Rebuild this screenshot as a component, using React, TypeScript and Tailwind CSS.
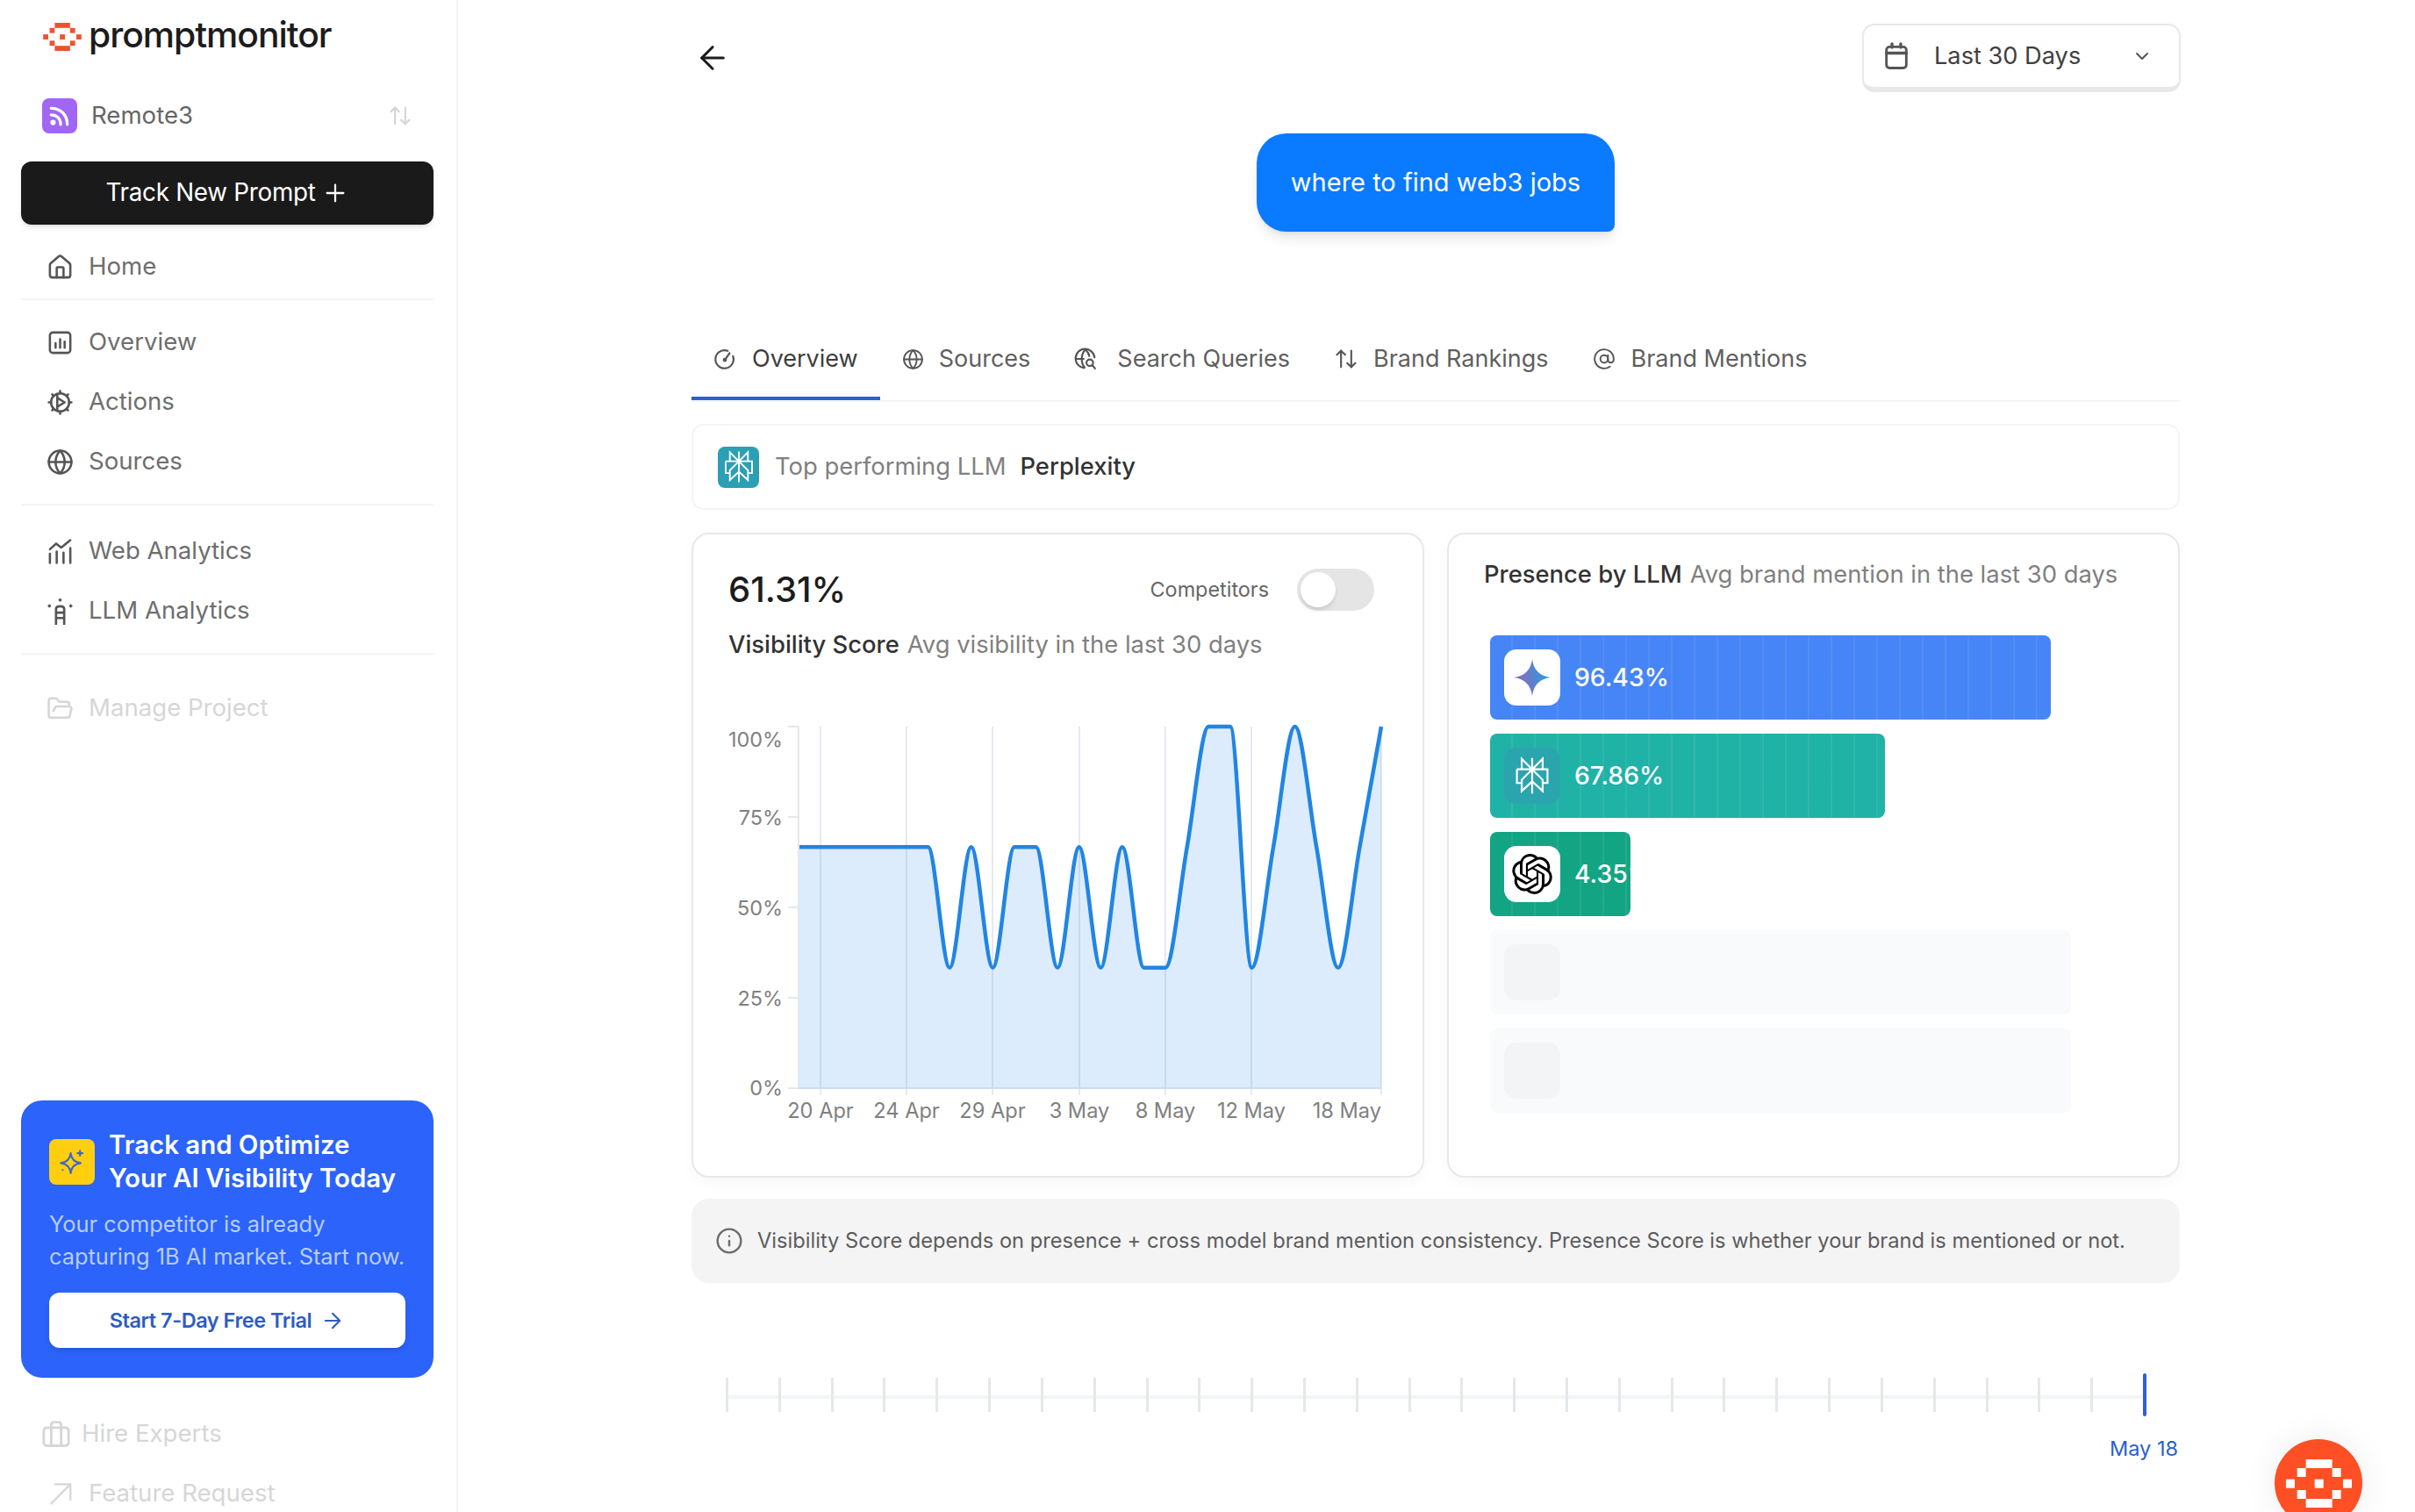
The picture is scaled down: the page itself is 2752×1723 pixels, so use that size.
import type { ReactNode } from 'react';
import {
  ArrowLeft,
  ArrowRight,
  ArrowUpDown,
  AtSign,
  ChevronDown,
  FolderOpen,
  Globe,
  House,
  Info,
  Plus,
} from 'lucide-react';
import { SiOpenai } from 'react-icons/si';

// chart data, one value per day
const series = [67, 67, 67, 67, 67, 67, 67, 33, 67, 33, 67, 67, 33, 67, 33, 67, 33, 33, 67, 100, 100, 33, 67, 100, 67, 33, 67, 100];
const xStep = 664 / 27;
const pts = series.map((v, i) => ({ x: 80 + i * xStep, y: 430 - (412 * (v === 67 ? 66.67 : v === 33 ? 33.33 : v)) / 100 }));

function sign(n: number) {
  return n < 0 ? -1 : 1;
}

// same maths as a monotone-x curve
function monotonePath(p: { x: number; y: number }[]) {
  const t: number[] = [];
  for (let i = 1; i < p.length - 1; i++) {
    const h0 = p[i].x - p[i - 1].x;
    const h1 = p[i + 1].x - p[i].x;
    const s0 = (p[i].y - p[i - 1].y) / h0;
    const s1 = (p[i + 1].y - p[i].y) / h1;
    const m = (s0 * h1 + s1 * h0) / (h0 + h1);
    t[i] = (sign(s0) + sign(s1)) * Math.min(Math.abs(s0), Math.abs(s1), 0.5 * Math.abs(m)) || 0;
  }
  const last = p.length - 1;
  t[0] = (3 * (p[1].y - p[0].y)) / (p[1].x - p[0].x) / 2 - t[1] / 2;
  t[last] = (3 * (p[last].y - p[last - 1].y)) / (p[last].x - p[last - 1].x) / 2 - t[last - 1] / 2;
  let d = `M${p[0].x},${p[0].y}`;
  for (let i = 0; i < last; i++) {
    const dx = (p[i + 1].x - p[i].x) / 3;
    d += `C${p[i].x + dx},${p[i].y + dx * t[i]},${p[i + 1].x - dx},${p[i + 1].y - dx * t[i + 1]},${p[i + 1].x},${p[i + 1].y}`;
  }
  return d;
}

const linePath = monotonePath(pts);
const yTicks = [18, 121, 224, 327, 430];
const xTicks = [
  { x: 105, label: '20 Apr' },
  { x: 203, label: '24 Apr' },
  { x: 301, label: '29 Apr' },
  { x: 400, label: '3 May' },
  { x: 498, label: '8 May' },
  { x: 596, label: '12 May' },
];

function Svg({ className, children }: { className?: string; children: ReactNode }) {
  return (
    <svg viewBox="0 0 24 24" fill="none" stroke="currentColor" strokeWidth="2" strokeLinecap="round" strokeLinejoin="round" className={className}>
      {children}
    </svg>
  );
}

function LogoMark({ className }: { className?: string }) {
  return (
    <svg viewBox="0 0 225 165" fill="currentColor" className={className}>
      <rect x="68" y="0" width="90" height="30" />
      <rect x="38" y="30" width="30" height="30" />
      <rect x="158" y="30" width="30" height="30" />
      <rect x="0" y="68" width="30" height="30" />
      <rect x="98" y="68" width="30" height="30" />
      <rect x="195" y="68" width="30" height="30" />
      <rect x="38" y="105" width="30" height="30" />
      <rect x="158" y="105" width="30" height="30" />
      <rect x="68" y="135" width="90" height="30" />
    </svg>
  );
}

function PerplexityMark({ className }: { className?: string }) {
  return (
    <svg viewBox="0 0 24 24" fill="none" stroke="currentColor" strokeWidth="1.2" strokeLinejoin="miter" className={className}>
      <path d="M12 1V23M5.5 1.5L12 8L18.5 1.5V8H5.5ZM2.5 8H21.5V16.5H18.5M2.5 8V16.5H5.5M12 8L5.5 14.5V21.5L12 15.5L18.5 21.5V14.5L12 8" />
    </svg>
  );
}

function GeminiMark({ className }: { className?: string }) {
  return (
    <svg viewBox="0 0 24 24" className={className}>
      <defs>
        <linearGradient id="gem" x1="0" y1="0.6" x2="1" y2="0.4">
          <stop offset="0" stopColor="#9a63b8" />
          <stop offset="1" stopColor="#1fa2e2" />
        </linearGradient>
      </defs>
      <path fill="url(#gem)" d="M12 1C12.8 7.5 16.5 11.2 23 12C16.5 12.8 12.8 16.5 12 23C11.2 16.5 7.5 12.8 1 12C7.5 11.2 11.2 7.5 12 1Z" />
    </svg>
  );
}

const navIcon = 'w-[31px] h-[31px]';

const OverviewIcon = (
  <Svg className={navIcon}>
    <rect x="3" y="3" width="18" height="18" rx="2.5" />
    <path d="M8 12.5V16.5M12 9V16.5M16 11V16.5" />
  </Svg>
);

const ActionsIcon = (
  <Svg className={navIcon}>
    <circle cx="12" cy="12" r="8" />
    <path d="M12 2V4M12 20V22M2 12H4M20 12H22M5 5L6.4 6.4M17.6 17.6L19 19M5 19L6.4 17.6M17.6 6.4L19 5" />
    <path d="M9.5 5V19M9.5 8L16 12L9.5 16" />
  </Svg>
);

const WebIcon = (
  <Svg className={navIcon}>
    <path d="M3 10L8.5 5L13 8.5L21 2" />
    <path d="M3 14V22M9 12V22M15 13V22M21 9V22" />
  </Svg>
);

const LlmIcon = (
  <svg viewBox="0 0 28 28" className={navIcon}>
    <path fill="currentColor" d="M14 0.5L16 2.5L14 4.5L12 2.5ZM3 6.5L5 8.5L3 10.5L1 8.5ZM25 6.5L27 8.5L25 10.5L23 8.5Z" />
    <path fill="none" stroke="currentColor" strokeWidth="2.4" d="M9.8 28V11.5C9.8 8 18.2 8 18.2 11.5V28M9.8 15.5H18.2M9.8 21H18.2" />
  </svg>
);

const BriefcaseIcon = (
  <Svg className="w-[34px] h-[34px]">
    <rect x="2" y="7" width="20" height="14.5" rx="2.5" />
    <path d="M8 21.5V5C8 3.5 9 2.5 10.5 2.5H13.5C15 2.5 16 3.5 16 5V21.5" />
  </Svg>
);

const GaugeIcon = (
  <Svg className="w-[26px] h-[26px]">
    <path d="M15 3.5A9.5 9.5 0 1 0 20.5 9" />
    <path d="M12 13L17 6" />
    <circle cx="12" cy="13" r="1.2" />
  </Svg>
);

const GlobeSearchIcon = (
  <Svg className="w-[26px] h-[26px]">
    <path d="M21.5 10.5A10 10 0 1 0 10.5 21.5" />
    <path d="M2 12H10M12 2C9 5 8 8.5 8 12C8 15 9 18.5 11 21M12 2C14 4 15.5 6 16 9" />
    <circle cx="16.5" cy="16" r="3.5" />
    <path d="M19 18.5L22 22" />
  </Svg>
);

const CalendarIcon = (
  <Svg className="w-[34px] h-[34px]">
    <rect x="4" y="4.5" width="16" height="17" rx="2.5" />
    <path d="M8.5 2V5M15.5 2V5M4 9.5H20" strokeWidth="2.4" />
  </Svg>
);

function NavRow({ icon, label }: { icon: ReactNode; label: string }) {
  return (
    <div className="h-[68px] pl-[53px] flex items-center gap-[17px] text-[#6e6e6e] text-[27.6px]">
      <span className="text-[#555555] w-[31px] flex justify-center">{icon}</span>
      {label}
    </div>
  );
}

function Tab({ icon, label, active, gap }: { icon: ReactNode; label: string; active?: boolean; gap: string }) {
  return (
    <div className={`h-[80px] px-[25px] flex items-center ${gap} ${active ? 'pb-[10px] border-b-[4px] border-[#2f5fce] text-[#3d3d3d]' : 'pb-[14px] text-[#5f5f5f]'}`}>
      <span className="text-[#555555] flex">{icon}</span>
      <span className="text-[27px]">{label}</span>
    </div>
  );
}

const stripes = 'bg-[image:repeating-linear-gradient(90deg,transparent_0,transparent_24px,rgba(255,255,255,0.07)_24px,rgba(255,255,255,0.07)_26px)]';

function VisibilityChart() {
  return (
    <svg viewBox="0 0 760 470" className="w-[760px] h-[470px] mt-[55px]">
      {[...xTicks.map((t) => t.x), 744].map((x) => (
        <line key={x} x1={x} x2={x} y1="18" y2="438" stroke="#e6e9f0" strokeWidth="2" />
      ))}
      <path d={`${linePath}L744,430L80,430Z`} fill="#2d8cf0" fillOpacity="0.17" />
      <path d={linePath} fill="none" stroke="#2185e4" strokeWidth="4.5" />
      <line x1="80" x2="80" y1="18" y2="430" stroke="#e5e7eb" strokeWidth="2" />
      <line x1="80" x2="744" y1="430" y2="430" stroke="#cddcf2" strokeWidth="2" />
      {yTicks.map((y) => (
        <line key={y} x1="68" x2="80" y1={y} y2={y} stroke="#e5e7eb" strokeWidth="2" />
      ))}
      <g fontSize="23.4" fill="#808080" textAnchor="end">
        <text x="62" y="41">100%</text>
        <text x="62" y="130">75%</text>
        <text x="62" y="233">50%</text>
        <text x="62" y="336">25%</text>
        <text x="62" y="438">0%</text>
      </g>
      <g fontSize="23.6" fill="#808080" textAnchor="middle">
        {xTicks.map((t) => (
          <text key={t.label} x={t.x} y="464">{t.label}</text>
        ))}
        <text x="744" y="464" textAnchor="end">18 May</text>
      </g>
    </svg>
  );
}

function LlmBar({ width, color, boxClass, value, children }: { width: string; color: string; boxClass: string; value: string; children: ReactNode }) {
  return (
    <div className={`h-[96px] ${width} ${color} ${stripes} rounded-[8px] overflow-hidden flex items-center pl-[16px] gap-[16px]`}>
      <div className={`w-[64px] h-[64px] shrink-0 rounded-[14px] flex items-center justify-center ${boxClass}`}>{children}</div>
      <span className="text-white text-[28.3px] font-medium whitespace-nowrap">{value}</span>
    </div>
  );
}

function EmptyBar() {
  return (
    <div className="h-[96px] w-[662px] bg-[#f9fafb] rounded-[8px] flex items-center pl-[16px]">
      <div className="w-[64px] h-[64px] rounded-[14px] bg-[#f3f4f6]" />
    </div>
  );
}

export default function App() {
  return (
    <div className="relative w-[2752px] h-[1723px] overflow-hidden bg-white flex [font-family:Inter,sans-serif]">
      <aside className="w-[522px] shrink-0 h-[1723px] border-r-2 border-[#f3f4f6] flex flex-col *:shrink-0">
        <div className="h-[48px] mt-[18px] pl-[48px] flex items-center gap-[7px] text-[#1c1c1c]">
          <LogoMark className="w-[46px] h-[32px] text-[#ee5330]" />
          <span className="text-[40.8px] font-medium tracking-[-0.025em] relative -top-[2px]">promptmonitor</span>
        </div>
        <div className="mt-[46px] h-[40px] pl-[48px] pr-[50px] flex items-center">
          <div className="w-[40px] h-[40px] rounded-[8px] bg-[#a066f5] flex items-center justify-center text-white">
            <svg viewBox="0 0 24 24" fill="none" stroke="currentColor" strokeWidth="3" strokeLinecap="round" className="w-[26px] h-[26px]">
              <path d="M3 4C13 4 20 11 20 21M3 11C9 11 13 15 13 21" />
              <circle cx="5" cy="19" r="1.4" fill="currentColor" />
            </svg>
          </div>
          <span className="ml-[16px] text-[27.6px] text-[#666666]">Remote3</span>
          <ArrowUpDown className="ml-auto w-[28px] h-[28px] text-[#d4d4d4]" strokeWidth={1.8} />
        </div>
        <div className="mt-[32px] ml-[24px] mr-[26px] h-[72px] rounded-[12px] bg-[#1a1a1a] shadow-md flex items-center justify-center gap-[6px] text-white text-[27.8px] tracking-[-0.01em]">
          Track New Prompt
          <Plus className="w-[32px] h-[32px]" strokeWidth={1.7} />
        </div>
        <div className="mt-[14px]">
          <NavRow icon={<House className={navIcon} />} label="Home" />
        </div>
        <div className="ml-[24px] mr-[26px] mt-[2px] h-[2px] bg-[#f3f4f6]" />
        <div className="mt-[14px]">
          <NavRow icon={OverviewIcon} label="Overview" />
          <NavRow icon={ActionsIcon} label="Actions" />
          <NavRow icon={<Globe className={navIcon} />} label="Sources" />
        </div>
        <div className="ml-[24px] mr-[26px] mt-[14px] h-[2px] bg-[#f3f4f6]" />
        <div className="mt-[18px]">
          <NavRow icon={WebIcon} label="Web Analytics" />
          <NavRow icon={LlmIcon} label="LLM Analytics" />
        </div>
        <div className="ml-[24px] mr-[26px] mt-[14px] h-[2px] bg-[#f3f4f6]" />
        <div className="mt-[27px] h-[68px] pl-[53px] flex items-center gap-[17px] text-[#d6d6d6] text-[27.6px]">
          <FolderOpen className={navIcon} />
          Manage Project
        </div>

        <div className="mt-[413px] ml-[24px] mr-[26px] h-[316px] rounded-[24px] bg-[#2b63fb] pt-[32px] px-[32px]">
          <div className="flex items-center gap-[16px]">
            <div className="w-[52px] h-[52px] rounded-[8px] bg-[#ffcf0f] flex items-center justify-center text-[#3f67c9]">
              <Svg className="w-[34px] h-[34px]">
                <path strokeWidth="1.5" d="M12 4C12.6 9 15 11.4 20 12C15 12.6 12.6 15 12 20C11.4 15 9 12.6 4 12C9 11.4 11.4 9 12 4Z" transform="translate(-1 1)" />
                <path strokeWidth="1.5" d="M18.5 3V7M16.5 5H20.5M4.5 18.5H4.6" />
              </Svg>
            </div>
            <div className="text-white text-[29.4px] font-semibold leading-[38px] whitespace-nowrap">
              <div>Track and Optimize</div>
              <div>Your AI Visibility Today</div>
            </div>
          </div>
          <p className="mt-[14px] text-[25.4px] leading-[37px] text-[#b8cdff] whitespace-nowrap">
            Your competitor is already
            <br />
            capturing 1B AI market. Start now.
          </p>
          <div className="mt-[23px] h-[63px] rounded-[12px] bg-white shadow-md flex items-center justify-center gap-[10px] text-[#2d5cc2] text-[23.5px] font-semibold tracking-[-0.02em]">
            Start 7-Day Free Trial
            <ArrowRight className="w-[28px] h-[28px]" strokeWidth={1.8} />
          </div>
        </div>

        <div className="mt-[30px] h-[68px] pl-[47px] flex items-center gap-[12px] text-[#d6d6d6] text-[27.6px]">
          {BriefcaseIcon}
          Hire Experts
        </div>
        <div className="h-[68px] pl-[54px] flex items-center gap-[17px] text-[#d6d6d6] text-[27.6px]">
          <Svg className="w-[30px] h-[30px]">
            <path d="M3.5 21L21 3.5M7 3.5H21V17.5" strokeWidth="1.8" />
          </Svg>
          Feature Request
        </div>
      </aside>

      <main className="ml-[266px] w-[1696px] shrink-0">
        <div className="mt-[27px] flex items-center justify-between h-[78px]">
          <ArrowLeft className="ml-[3px] w-[42px] h-[42px] text-[#1c1c1c]" strokeWidth={1.8} />
          <div className="w-[363px] h-[78px] mr-[-1px] rounded-[14px] border-2 border-b-[6px] border-[#e8e8e8] flex items-center pl-[20px] pr-[30px] text-[#404040] text-[27.2px]">
            <span className="text-[#555555] flex">{CalendarIcon}</span>
            <span className="ml-[26px]">Last 30 Days</span>
            <ChevronDown className="ml-auto w-[24px] h-[24px] text-[#555555]" strokeWidth={2} />
          </div>
        </div>

        <div className="mt-[47px] flex justify-center">
          <div className="h-[112px] px-[39px] rounded-[34px] rounded-br-[8px] bg-[#0a7aff] text-white text-[29px] flex items-center shadow-lg">
            where to find web3 jobs
          </div>
        </div>

        <div className="mt-[112px] flex border-b-2 border-[#f3f4f6]">
          <Tab icon={GaugeIcon} label="Overview" active gap="gap-[18px]" />
          <Tab icon={<Globe className="w-[25px] h-[25px]" strokeWidth={1.8} />} label="Sources" gap="gap-[17px]" />
          <Tab icon={GlobeSearchIcon} label="Search Queries" gap="gap-[23px]" />
          <Tab icon={<ArrowUpDown className="w-[28px] h-[28px]" strokeWidth={1.8} />} label="Brand Rankings" gap="gap-[17px]" />
          <Tab icon={<AtSign className="w-[26px] h-[26px]" strokeWidth={1.8} />} label="Brand Mentions" gap="gap-[18px]" />
        </div>

        <div className="mt-[25px] h-[98px] rounded-[14px] border-2 border-[#f3f4f6] flex items-center pl-[28px] text-[27.4px]">
          <div className="w-[47px] h-[47px] rounded-[8px] bg-[#2b9fb3] flex items-center justify-center text-white">
            <PerplexityMark className="w-[38px] h-[38px]" />
          </div>
          <span className="ml-[18px] text-[#808080]">Top performing LLM</span>
          <span className="ml-[16px] text-[#333333] font-medium">Perplexity</span>
        </div>

        <div className="mt-[26px] flex gap-[26px]">
          <section className="w-[835px] h-[735px] rounded-[20px] border-2 border-[#e8e8e8] shadow-[0_6px_16px_rgba(0,0,0,0.03)] pt-[39px] pl-[40px]">
            <div className="h-[48px] flex items-center pr-[55px]">
              <span className="text-[40px] font-medium text-[#1c1c1c]">61.31%</span>
              <span className="ml-auto text-[23.4px] text-[#666666]">Competitors</span>
              <div className="ml-[32px] w-[88px] h-[48px] rounded-full bg-[#e5e5e5] flex items-center pl-[4px]">
                <div className="w-[40px] h-[40px] rounded-full bg-white shadow-md" />
              </div>
            </div>
            <div className="mt-[18px] leading-[40px] text-[27.4px] whitespace-nowrap">
              <span className="text-[#333333] font-medium">Visibility Score</span>
              <span className="ml-[9px] text-[#808080]">Avg visibility in the last 30 days</span>
            </div>
            <div className="pt-[1px]">
              <VisibilityChart />
            </div>
          </section>

          <section className="w-[835px] h-[735px] rounded-[20px] border-2 border-[#e8e8e8] shadow-[0_6px_16px_rgba(0,0,0,0.03)] pt-[25px] pl-[40px]">
            <div className="leading-[40px] text-[27.4px] whitespace-nowrap">
              <span className="text-[#333333] font-medium">Presence by LLM</span>
              <span className="ml-[9px] text-[#808080]">Avg brand mention in the last 30 days</span>
            </div>
            <div className="mt-[50px] ml-[7px] flex flex-col gap-[16px]">
              <LlmBar width="w-[639px]" color="bg-[#4685f5]" boxClass="bg-white" value="96.43%">
                <GeminiMark className="w-[46px] h-[46px]" />
              </LlmBar>
              <LlmBar width="w-[450px]" color="bg-[#20b2a6]" boxClass="bg-[#2aa5ad] text-white" value="67.86%">
                <PerplexityMark className="w-[44px] h-[44px]" />
              </LlmBar>
              <LlmBar width="w-[160px]" color="bg-[#13a583]" boxClass="bg-white text-black" value="4.35%">
                <SiOpenai className="w-[46px] h-[46px]" />
              </LlmBar>
              <EmptyBar />
              <EmptyBar />
            </div>
          </section>
        </div>

        <div className="mt-[24px] h-[96px] rounded-[20px] bg-[#f4f4f5] flex items-center pl-[27px] gap-[16px] text-[23.65px] text-[#5c5c5c] whitespace-nowrap">
          <Info className="w-[32px] h-[32px] text-[#6b6b6b]" strokeWidth={1.8} />
          Visibility Score depends on presence + cross model brand mention consistency. Presence Score is whether your brand is mentioned or not.
        </div>

        <div className="relative mt-[103px] ml-[39px] w-[1619px] h-[49px] flex items-center justify-between">
          <div className="absolute left-0 right-0 top-[25px] h-[4px] bg-[#f3f4f6]" />
          {Array.from({ length: 27 }).map((_, i) => (
            <div key={i} className="relative w-[3px] h-[39px] bg-[#e5e7eb]" />
          ))}
          <div className="relative w-[4px] h-[49px] rounded-full bg-[#2f5fd9]" />
        </div>
        <div className="mt-[21px] pr-[2px] text-right text-[23.5px] leading-[32px] text-[#2a5fd0]">May 18</div>
      </main>

      <div className="absolute left-[2592px] top-[1640px] w-[100px] h-[100px] rounded-full bg-[#ff4f24] shadow-[0_0_40px_rgba(0,0,0,0.08)] flex items-center justify-center text-white">
        <LogoMark className="w-[75px] h-[55px]" />
      </div>
    </div>
  );
}
